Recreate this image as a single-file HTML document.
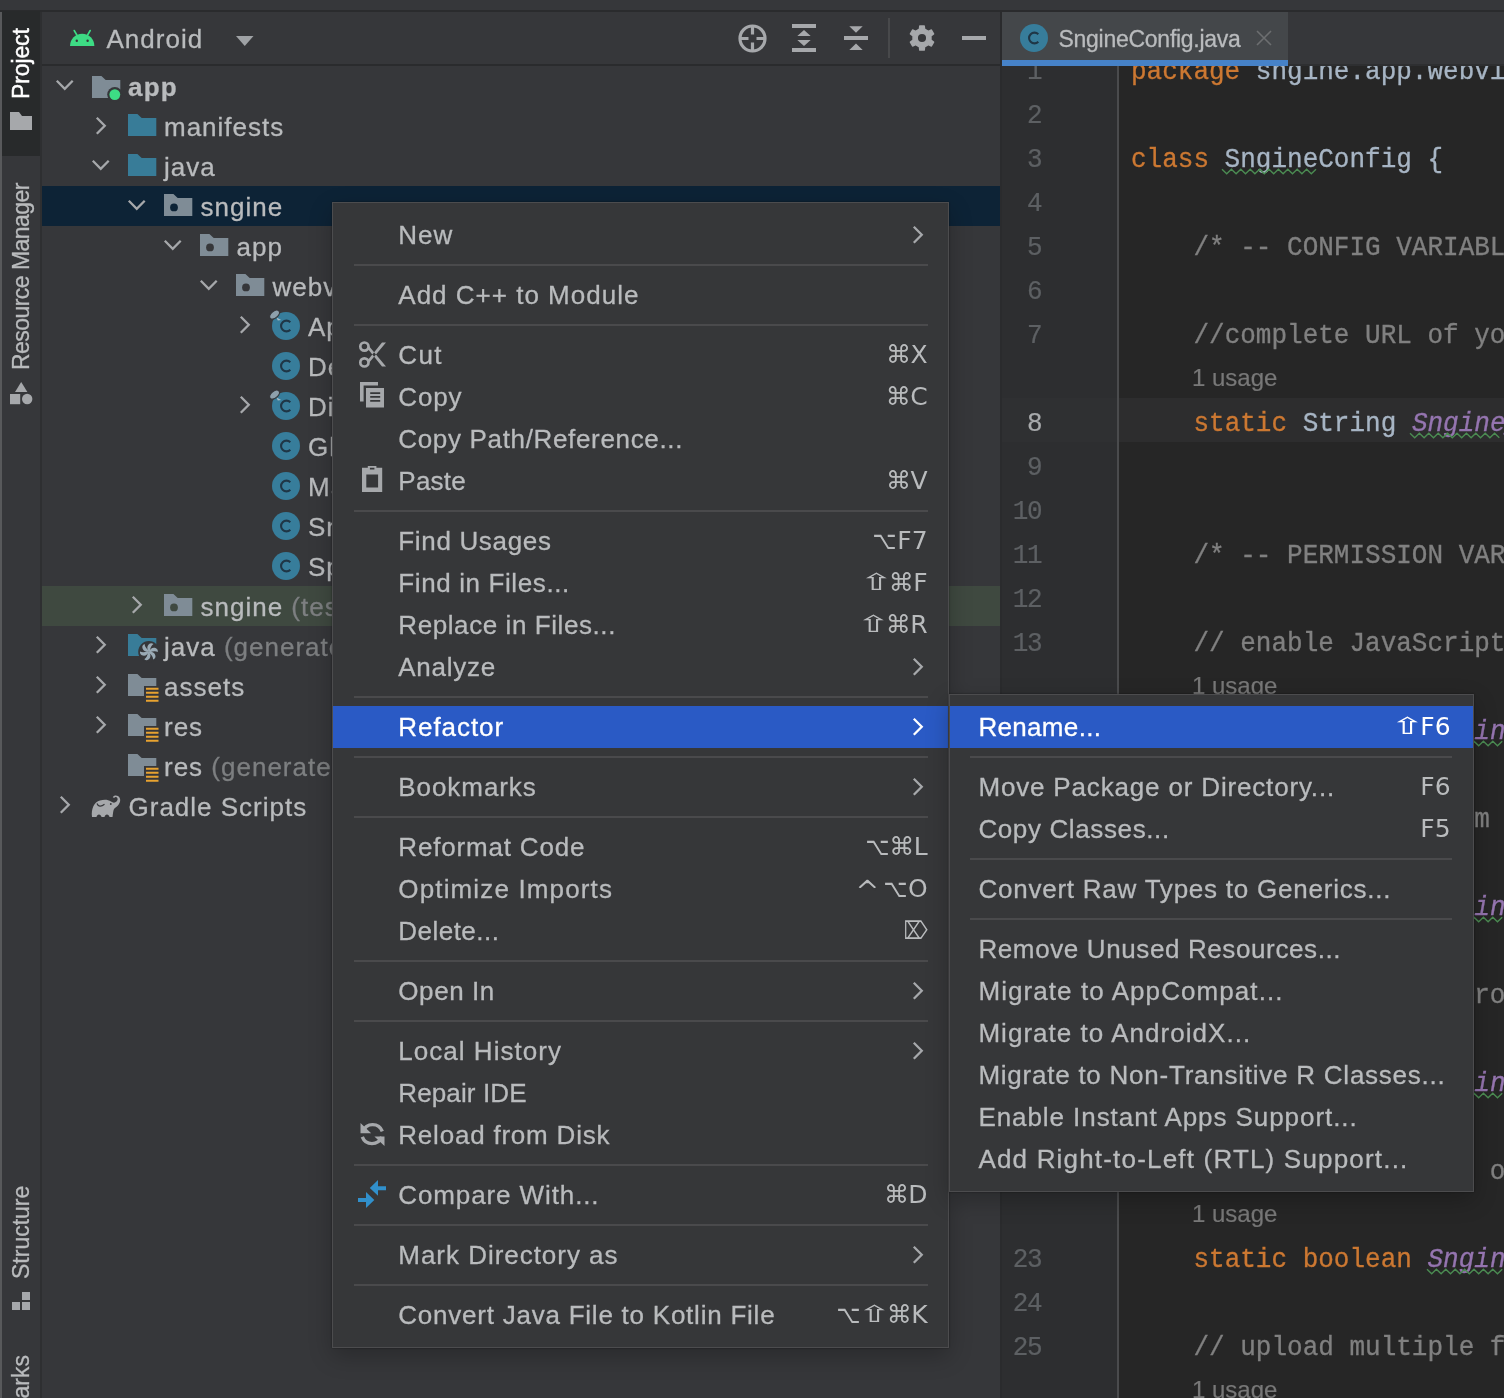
<!DOCTYPE html><html><head><meta charset="utf-8"><title>IDE</title><style>
*{box-sizing:border-box;margin:0;padding:0}
html,body{width:1504px;height:1398px;overflow:hidden;background:#36373a}
body{position:relative;font-family:"Liberation Sans","DejaVu Sans",sans-serif;font-size:26px;color:#b9bbbd;letter-spacing:.8px;-webkit-text-stroke:.3px}
#root{position:absolute;left:0;top:0;width:1504px;height:1398px;will-change:transform}
.abs{position:absolute}
.t{position:absolute;white-space:pre;line-height:40px;height:40px;letter-spacing:1px}
.row{position:absolute;left:42px;width:958px;height:40px}
.mi{position:absolute;white-space:pre;line-height:42px;height:42px;left:0;width:100%}
.mi .l{position:absolute;top:.4px}
.mi .r{position:absolute;top:0;font-family:"DejaVu Sans","Liberation Sans",sans-serif;font-size:25px;letter-spacing:0;-webkit-text-stroke:0}
.sep{position:absolute;height:2px;background:#4a4a4c}
.menu{position:absolute;background:#363739;border:1px solid #4c4c4e;box-shadow:0 0 2px rgba(0,0,0,.45),0 8px 22px rgba(0,0,0,.24)}
.hi{background:#2a5ac5;color:#fff}
.code{position:absolute;left:1131px;white-space:pre;font-family:"Liberation Mono","DejaVu Sans Mono",monospace;font-size:26px;letter-spacing:0;line-height:44px;height:44px;color:#a7b5c4;transform-origin:0 28.900px;transform:scaleY(1.09);-webkit-text-stroke:.3px}
.ln{position:absolute;left:1000px;width:41px;text-align:right;font-family:"Liberation Mono","DejaVu Sans Mono",monospace;font-size:26px;letter-spacing:-1.500px;line-height:44px;height:44px;color:#5d6063;transform-origin:0 28.900px;transform:scaleY(1.09);-webkit-text-stroke:.2px}
.us{position:absolute;left:1192px;font-size:24px;letter-spacing:0;line-height:44px;height:44px;color:#787878;white-space:pre;-webkit-text-stroke:.2px}
.kw{color:#cc7832} .cm{color:#808080} .fld{color:#9575b0;font-style:italic}
.vt{position:absolute;white-space:pre;transform-origin:0 0;transform:rotate(-90deg);font-size:23px;letter-spacing:0;line-height:30px;height:30px}
svg{position:absolute;overflow:visible}
</style></head><body><div id="root">
<div class="abs" style="left:0;top:10px;width:1504px;height:2px;background:#2a2b2d"></div>
<div class="abs" style="left:0;top:12px;width:2px;height:1386px;background:#58595b"></div>
<div class="abs" style="left:2px;top:11px;width:38px;height:145px;background:#282a2b"></div>
<div class="abs" style="left:40px;top:12px;width:2px;height:1386px;background:#2e2f31"></div>
<div class="abs" style="left:42px;top:64px;width:958px;height:2px;background:#2a2b2d"></div>
<div class="vt" style="left:6px;top:99px;color:#ffffff;letter-spacing:-.13px;-webkit-text-stroke:.5px #fff">Project</div>
<div class="vt" style="left:6px;top:370px;color:#b9bbbd;letter-spacing:-.55px">Resource Manager</div>
<div class="vt" style="left:6px;top:1279px;color:#b9bbbd;">Structure</div>
<div class="vt" style="left:6px;top:1470px;color:#b9bbbd;">Bookmarks</div>
<svg style="left:10px;top:112px" width="22" height="18" viewBox="0 0 22 18"><path d="M0 0h9l3 4h10v14H0z" fill="#a6a8ab"/></svg>
<svg style="left:9.800px;top:382px" width="23" height="23" viewBox="0 0 23 23"><path d="M11.200 0l6.200 10H5z" fill="#a6a8ab"/><rect x="0" y="12" width="10.200" height="10.200" fill="#a6a8ab"/><circle cx="17.200" cy="17" r="5.200" fill="#a6a8ab"/></svg>
<svg style="left:12px;top:1292px" width="18" height="18" viewBox="0 0 18 18"><rect x="10" y="0" width="8" height="8" fill="#a6a8ab"/><rect x="0" y="10" width="8" height="8" fill="#a6a8ab"/><rect x="10" y="10" width="8" height="8" fill="#a6a8ab"/></svg>
<svg style="left:70px;top:29px" width="25" height="18" viewBox="0 0 25 18"><path d="M0 17a12.200 12.200 0 0 1 24.400 0z" fill="#3ddc84"/><path d="M4.200 1.500l3.500 6M20.200 1.500l-3.500 6" stroke="#3ddc84" stroke-width="1.600" stroke-linecap="round"/><circle cx="6.800" cy="11.800" r="1.200" fill="#36373a"/><circle cx="17.600" cy="11.800" r="1.200" fill="#36373a"/></svg>
<div class="t" style="left:106.500px;top:19px">Android</div>
<svg style="left:235.500px;top:36px" width="17.500" height="10" viewBox="0 0 17.500 10"><path d="M0 0h17.500l-8.750 10z" fill="#9fa2a5"/></svg>
<svg style="left:737.500px;top:23.500px" width="29" height="29" viewBox="0 0 29 29" fill="none" stroke="#a6a8ab" stroke-width="3.200"><circle cx="14.500" cy="14.500" r="12.500"/><path d="M14.500 2v8.500M14.500 18.500v8.500M2 14.500h8.500M18.500 14.500h8.500"/></svg>
<svg style="left:792px;top:24px" width="24" height="28" viewBox="0 0 24 28" fill="#a6a8ab"><rect x="0" y="0" width="24" height="4"/><rect x="0" y="24" width="24" height="4"/><path d="M12 6l6.700 6H5.300zM12 22l6.700-6H5.300z"/></svg>
<svg style="left:844px;top:24px" width="24" height="28" viewBox="0 0 24 28" fill="#a6a8ab"><rect x="0" y="12" width="24" height="4"/><path d="M12 8.700l6.700-6.500H5.300zM12 19.500l6.700 6.500H5.300z"/></svg>
<div class="abs" style="left:888px;top:18px;width:2px;height:40px;background:#48494b"></div>
<svg style="left:909px;top:25px" width="26" height="26" viewBox="0 0 26 26"><path fill-rule="evenodd" fill="#a6a8ab" stroke="#a6a8ab" stroke-width="1.500" stroke-linejoin="round" d="M10.82 0.89L15.18 0.89L15.57 4.17L19.37 6.36L22.39 5.06L24.57 8.83L21.93 10.81L21.93 15.19L24.57 17.17L22.39 20.94L19.37 19.64L15.57 21.83L15.18 25.11L10.82 25.11L10.43 21.83L6.63 19.64L3.61 20.94L1.43 17.17L4.07 15.19L4.07 10.81L1.43 8.83L3.61 5.06L6.63 6.36L10.43 4.17ZM17.8 13a4.8 4.8 0 1 0 -9.6 0a4.8 4.8 0 1 0 9.6 0Z"/></svg>
<div class="abs" style="left:962px;top:36px;width:24px;height:4px;background:#a6a8ab"></div>
<div class="row" style="top:186px;background:#0d2336"></div>
<div class="row" style="top:586px;background:#3f4940"></div>
<svg style="left:56.25px;top:79.5px" width="17.500" height="10" viewBox="0 0 17.500 10" fill="none" stroke="#a6a8ab" stroke-width="2.300"><path d="M.800 .800l7.950 7.950 7.950-7.950"/></svg>
<svg style="left:92px;top:76px" width="30" height="30" viewBox="0 0 30 30"><path d="M0 0h9.400l4.300 3.900h14.600v18.100H0z" fill="#7f8c96"/><circle cx="22.800" cy="18.600" r="7.600" fill="#36373a"/><circle cx="22.800" cy="18.600" r="5.400" fill="#3ddc84"/></svg>
<div class="t" style="left:128px;top:67px;font-weight:bold;letter-spacing:1.2px">app</div>
<svg style="left:95.5px;top:116.65px" width="10" height="17.500" viewBox="0 0 10 17.500" fill="none" stroke="#a6a8ab" stroke-width="2.300"><path d="M.800 .800l7.950 7.950-7.950 7.950"/></svg>
<svg style="left:128px;top:114px" width="28" height="22" viewBox="0 0 28 22"><path d="M0 0h9.400l4.300 3.900h14.600v18.100H0z" fill="#387c98"/></svg>
<div class="t" style="left:164px;top:107px;">manifests</div>
<svg style="left:92.05px;top:159.5px" width="17.500" height="10" viewBox="0 0 17.500 10" fill="none" stroke="#a6a8ab" stroke-width="2.300"><path d="M.800 .800l7.950 7.950 7.950-7.950"/></svg>
<svg style="left:128px;top:154px" width="28" height="22" viewBox="0 0 28 22"><path d="M0 0h9.400l4.300 3.900h14.600v18.100H0z" fill="#387c98"/></svg>
<div class="t" style="left:164px;top:147px;">java</div>
<svg style="left:128.25px;top:199.5px" width="17.500" height="10" viewBox="0 0 17.500 10" fill="none" stroke="#a6a8ab" stroke-width="2.300"><path d="M.800 .800l7.950 7.950 7.950-7.950"/></svg>
<svg style="left:164px;top:194px" width="28" height="22" viewBox="0 0 28 22"><path d="M0 0h9.400l4.300 3.900h14.600v18.100H0z" fill="#7f8c96"/><circle cx="10" cy="13.400" r="3.900" fill="#0d2336"/></svg>
<div class="t" style="left:200.5px;top:187px;">sngine</div>
<svg style="left:164.25px;top:239.5px" width="17.500" height="10" viewBox="0 0 17.500 10" fill="none" stroke="#a6a8ab" stroke-width="2.300"><path d="M.800 .800l7.950 7.950 7.950-7.950"/></svg>
<svg style="left:200px;top:234px" width="28" height="22" viewBox="0 0 28 22"><path d="M0 0h9.400l4.300 3.900h14.600v18.100H0z" fill="#7f8c96"/><circle cx="10" cy="13.400" r="3.900" fill="#36373a"/></svg>
<div class="t" style="left:236.5px;top:227px;">app</div>
<svg style="left:200.25px;top:279.5px" width="17.500" height="10" viewBox="0 0 17.500 10" fill="none" stroke="#a6a8ab" stroke-width="2.300"><path d="M.800 .800l7.950 7.950 7.950-7.950"/></svg>
<svg style="left:236px;top:274px" width="28" height="22" viewBox="0 0 28 22"><path d="M0 0h9.400l4.300 3.900h14.600v18.100H0z" fill="#7f8c96"/><circle cx="10" cy="13.400" r="3.900" fill="#36373a"/></svg>
<div class="t" style="left:272.5px;top:267px;">webview</div>
<svg style="left:239.5px;top:316.25px" width="10" height="17.500" viewBox="0 0 10 17.500" fill="none" stroke="#a6a8ab" stroke-width="2.300"><path d="M.800 .800l7.950 7.950-7.950 7.950"/></svg>
<svg style="left:272.2px;top:312px" width="28" height="28" viewBox="0 0 28 28"><circle cx="14" cy="14" r="14" fill="#377d9b"/><path d="M18.300 10.200a5.400 5.400 0 1 0 0 7.600" fill="none" stroke="#1f3646" stroke-width="2.100"/><ellipse cx="2.500" cy="2.600" rx="5.800" ry="3.400" transform="rotate(-40 2.500 2.600)" fill="#8ea0ab" stroke="#36373a" stroke-width="1.200"/><path d="M4.600 5.500l4.600 2.600-3.400.400z" fill="#a9bcc6"/></svg>
<div class="t" style="left:308px;top:307px;">App</div>
<svg style="left:272.2px;top:352px" width="28" height="28" viewBox="0 0 28 28"><circle cx="14" cy="14" r="14" fill="#377d9b"/><path d="M18.300 10.200a5.400 5.400 0 1 0 0 7.600" fill="none" stroke="#1f3646" stroke-width="2.100"/></svg>
<div class="t" style="left:308px;top:347px;">Det</div>
<svg style="left:239.5px;top:396.25px" width="10" height="17.500" viewBox="0 0 10 17.500" fill="none" stroke="#a6a8ab" stroke-width="2.300"><path d="M.800 .800l7.950 7.950-7.950 7.950"/></svg>
<svg style="left:272.2px;top:392px" width="28" height="28" viewBox="0 0 28 28"><circle cx="14" cy="14" r="14" fill="#377d9b"/><path d="M18.300 10.200a5.400 5.400 0 1 0 0 7.600" fill="none" stroke="#1f3646" stroke-width="2.100"/><ellipse cx="2.500" cy="2.600" rx="5.800" ry="3.400" transform="rotate(-40 2.500 2.600)" fill="#8ea0ab" stroke="#36373a" stroke-width="1.200"/><path d="M4.600 5.500l4.600 2.600-3.400.400z" fill="#a9bcc6"/></svg>
<div class="t" style="left:308px;top:387px;">Dir</div>
<svg style="left:272.2px;top:432px" width="28" height="28" viewBox="0 0 28 28"><circle cx="14" cy="14" r="14" fill="#377d9b"/><path d="M18.300 10.200a5.400 5.400 0 1 0 0 7.600" fill="none" stroke="#1f3646" stroke-width="2.100"/></svg>
<div class="t" style="left:308px;top:427px;">Gli</div>
<svg style="left:272.2px;top:472px" width="28" height="28" viewBox="0 0 28 28"><circle cx="14" cy="14" r="14" fill="#377d9b"/><path d="M18.300 10.200a5.400 5.400 0 1 0 0 7.600" fill="none" stroke="#1f3646" stroke-width="2.100"/></svg>
<div class="t" style="left:308px;top:467px;">Mai</div>
<svg style="left:272.2px;top:512px" width="28" height="28" viewBox="0 0 28 28"><circle cx="14" cy="14" r="14" fill="#377d9b"/><path d="M18.300 10.200a5.400 5.400 0 1 0 0 7.600" fill="none" stroke="#1f3646" stroke-width="2.100"/></svg>
<div class="t" style="left:308px;top:507px;">Sng</div>
<svg style="left:272.2px;top:552px" width="28" height="28" viewBox="0 0 28 28"><circle cx="14" cy="14" r="14" fill="#377d9b"/><path d="M18.300 10.200a5.400 5.400 0 1 0 0 7.600" fill="none" stroke="#1f3646" stroke-width="2.100"/></svg>
<div class="t" style="left:308px;top:547px;">Spl</div>
<svg style="left:132px;top:596.25px" width="10" height="17.500" viewBox="0 0 10 17.500" fill="none" stroke="#a6a8ab" stroke-width="2.300"><path d="M.800 .800l7.950 7.950-7.950 7.950"/></svg>
<svg style="left:164px;top:594px" width="28" height="22" viewBox="0 0 28 22"><path d="M0 0h9.400l4.300 3.900h14.600v18.100H0z" fill="#7f8c96"/><circle cx="10" cy="13.400" r="3.900" fill="#3f4940"/></svg>
<div class="t" style="left:200.5px;top:587px;">sngine <span style="color:#7d7f81">(test)</span></div>
<svg style="left:95.5px;top:636.25px" width="10" height="17.500" viewBox="0 0 10 17.500" fill="none" stroke="#a6a8ab" stroke-width="2.300"><path d="M.800 .800l7.950 7.950-7.950 7.950"/></svg>
<svg style="left:128px;top:634px" width="32" height="30" viewBox="0 0 32 30"><path d="M0 0h9.400l4.300 3.900h14.600v18.100H0z" fill="#387c98"/><circle cx="20.900" cy="17.700" r="10.700" fill="#36373a"/><g transform="translate(20.900 17.700)" fill="#9aaab5"><path transform="rotate(0)" d="M0 0C-1.800 -2.500 -2.500 -5.500 .500 -7.900C1.800 -8.900 3.600 -8.500 4.600 -7.600C2.400 -6.200 1.300 -3.500 1.100 -.800z"/><path transform="rotate(60)" d="M0 0C-1.800 -2.500 -2.500 -5.500 .500 -7.900C1.800 -8.900 3.600 -8.500 4.600 -7.600C2.400 -6.200 1.300 -3.500 1.100 -.800z"/><path transform="rotate(120)" d="M0 0C-1.800 -2.500 -2.500 -5.500 .500 -7.900C1.800 -8.900 3.600 -8.500 4.600 -7.600C2.400 -6.200 1.300 -3.500 1.100 -.800z"/><path transform="rotate(180)" d="M0 0C-1.800 -2.500 -2.500 -5.500 .500 -7.900C1.800 -8.900 3.600 -8.500 4.600 -7.600C2.400 -6.200 1.300 -3.500 1.100 -.800z"/><path transform="rotate(240)" d="M0 0C-1.800 -2.500 -2.500 -5.500 .500 -7.900C1.800 -8.900 3.600 -8.500 4.600 -7.600C2.400 -6.200 1.300 -3.500 1.100 -.800z"/><path transform="rotate(300)" d="M0 0C-1.800 -2.500 -2.500 -5.500 .500 -7.900C1.800 -8.900 3.600 -8.500 4.600 -7.600C2.400 -6.200 1.300 -3.500 1.100 -.800z"/></g></svg>
<div class="t" style="left:164px;top:627px;">java <span style="color:#7d7f81">(generated)</span></div>
<svg style="left:95.5px;top:676.25px" width="10" height="17.500" viewBox="0 0 10 17.500" fill="none" stroke="#a6a8ab" stroke-width="2.300"><path d="M.800 .800l7.950 7.950-7.950 7.950"/></svg>
<svg style="left:128px;top:674px" width="32" height="32" viewBox="0 0 32 32"><path d="M0 0h9.400l4.300 3.900h14.600v18.100H0z" fill="#7f8c96"/><rect x="16" y="12" width="16" height="20" fill="#36373a"/><path d="M18 14.800h12.500M18 18.800h12.500M18 22.800h12.500M18 26.800h12.500" stroke="#e8a330" stroke-width="2.100"/></svg>
<div class="t" style="left:164px;top:667px;">assets</div>
<svg style="left:95.5px;top:716.25px" width="10" height="17.500" viewBox="0 0 10 17.500" fill="none" stroke="#a6a8ab" stroke-width="2.300"><path d="M.800 .800l7.950 7.950-7.950 7.950"/></svg>
<svg style="left:128px;top:714px" width="32" height="32" viewBox="0 0 32 32"><path d="M0 0h9.400l4.300 3.900h14.600v18.100H0z" fill="#7f8c96"/><rect x="16" y="12" width="16" height="20" fill="#36373a"/><path d="M18 14.800h12.500M18 18.800h12.500M18 22.800h12.500M18 26.800h12.500" stroke="#e8a330" stroke-width="2.100"/></svg>
<div class="t" style="left:164px;top:707px;">res</div>
<svg style="left:128px;top:754px" width="32" height="32" viewBox="0 0 32 32"><path d="M0 0h9.400l4.300 3.900h14.600v18.100H0z" fill="#7f8c96"/><rect x="16" y="12" width="16" height="20" fill="#36373a"/><path d="M18 14.800h12.500M18 18.800h12.500M18 22.800h12.500M18 26.800h12.500" stroke="#e8a330" stroke-width="2.100"/></svg>
<div class="t" style="left:164px;top:747px;">res <span style="color:#7d7f81">(generated)</span></div>
<svg style="left:59.5px;top:796.25px" width="10" height="17.500" viewBox="0 0 10 17.500" fill="none" stroke="#a6a8ab" stroke-width="2.300"><path d="M.800 .800l7.950 7.950-7.950 7.950"/></svg>
<svg style="left:91px;top:795px" width="30" height="22" viewBox="0 0 30 22"><path fill="#a6a8ab" d="M1 22C0 14 3 7 9 5.500C13 4.500 17 4.500 20 6.500C22 8 24 8 25.500 6.500C27 5 27 3 25.500 2.200C24.500 1.800 23.500 2.300 23.200 3L21.800 2.200C22.500 .500 25 -.200 27 1C29.500 2.500 30 6 28 9C26.500 11.500 24 12.500 23 14C22 16 22 19 21.500 22L18.500 22C18.300 20.500 17 19.500 16 19.500C14.800 19.500 13.800 20.500 13.500 22L10.500 22C10.300 20.500 9 19.500 8 19.500C6.800 19.500 5.800 20.500 5.500 22Z"/><path d="M6 8.500C7 11.500 10 12 13.500 9.300" fill="none" stroke="#36373a" stroke-width="1.200"/><circle cx="19.800" cy="9" r=".900" fill="#36373a"/></svg>
<div class="t" style="left:128.5px;top:787px;">Gradle Scripts</div>
<div class="abs" style="left:1000px;top:66px;width:504px;height:1332px;background:#262626"></div>
<div class="abs" style="left:1000px;top:66px;width:118px;height:1332px;background:#2d2e30"></div>
<div class="abs" style="left:1117px;top:66px;width:2px;height:1332px;background:#4a4b4d"></div>
<div class="abs" style="left:1000px;top:12px;width:2px;height:1386px;background:#2a2b2d"></div>
<div class="abs" style="left:1119px;top:398px;width:385px;height:44px;background:#2d2d2e"></div>
<div class="abs" style="left:1002px;top:398px;width:115px;height:44px;background:#2f3032"></div>
<div class="abs" style="left:1288px;top:64px;width:216px;height:2px;background:#2e2f31"></div>
<div class="abs" style="left:1002px;top:12px;width:286px;height:49px;background:#44474a"></div>
<div class="abs" style="left:1002px;top:60px;width:286px;height:6px;background:#4682c8"></div>
<svg style="left:1020px;top:24px" width="28" height="28" viewBox="0 0 28 28"><circle cx="14" cy="14" r="14" fill="#377d9b"/><path d="M18.300 10.200a5.400 5.400 0 1 0 0 7.600" fill="none" stroke="#1f3646" stroke-width="2.100"/></svg>
<div class="t" style="left:1058.500px;top:19px;font-size:23px;letter-spacing:-.27px;color:#b9bbbd">SngineConfig.java</div>
<svg style="left:1257px;top:31px" width="14" height="14" viewBox="0 0 14 14" stroke="#6c6e70" stroke-width="1.600"><path d="M0 0l14 14M14 0L0 14"/></svg>
<div class="abs" style="left:0;top:66px;width:1504px;height:1332px;overflow:hidden"><div class="abs" style="left:0;top:-66px;width:1504px;height:1398px">
<div class="ln" style="top:49.8px;">1</div>
<div class="code" style="top:49.8px"><span class="kw">package</span> sngine.app.webview;</div>
<div class="ln" style="top:93.8px;">2</div>
<div class="ln" style="top:137.8px;">3</div>
<div class="code" style="top:137.8px"><span class="kw">class</span> SngineConfig {</div>
<div class="ln" style="top:181.8px;">4</div>
<div class="ln" style="top:225.8px;">5</div>
<div class="code" style="top:225.8px">    <span class="cm">/* -- CONFIG VARIABLES -- */</span></div>
<div class="ln" style="top:269.8px;">6</div>
<div class="ln" style="top:313.8px;">7</div>
<div class="code" style="top:313.8px">    <span class="cm">//complete URL of your website</span></div>
<div class="us" style="top:355.6px">1 usage</div>
<div class="ln" style="top:401.8px;color:#a9abad">8</div>
<div class="code" style="top:401.8px">    <span class="kw">static</span> String <span class="fld">Sngine_URL</span></div>
<div class="ln" style="top:445.8px;">9</div>
<div class="ln" style="top:489.8px;">10</div>
<div class="ln" style="top:533.8px;">11</div>
<div class="code" style="top:533.8px">    <span class="cm">/* -- PERMISSION VARIABLES -- */</span></div>
<div class="ln" style="top:577.8px;">12</div>
<div class="ln" style="top:621.8px;">13</div>
<div class="code" style="top:621.8px">    <span class="cm">// enable JavaScript for webview</span></div>
<div class="us" style="top:663.6px">1 usage</div>
<div class="ln" style="top:709.8px;">14</div>
<div class="code" style="top:709.8px">    <span class="kw">static boolean</span> <span class="fld">Sngine_JS</span></div>
<div class="ln" style="top:753.8px;">15</div>
<div class="ln" style="top:797.8px;">16</div>
<div class="code" style="top:797.8px">    <span class="cm">// upload file from webview</span></div>
<div class="us" style="top:839.6px">1 usage</div>
<div class="ln" style="top:885.8px;">17</div>
<div class="code" style="top:885.8px">    <span class="kw">static boolean</span> <span class="fld">Sngine_FUPLOAD</span></div>
<div class="ln" style="top:929.8px;">18</div>
<div class="ln" style="top:973.8px;">19</div>
<div class="code" style="top:973.8px">    <span class="cm">// show and hide progress bar</span></div>
<div class="us" style="top:1015.6px">1 usage</div>
<div class="ln" style="top:1061.8px;">20</div>
<div class="code" style="top:1061.8px">    <span class="kw">static boolean</span> <span class="fld">Sngine_PBAR</span></div>
<div class="ln" style="top:1105.8px;">21</div>
<div class="ln" style="top:1149.8px;">22</div>
<div class="code" style="top:1149.8px">    <span class="cm">// enable location or not</span></div>
<div class="us" style="top:1191.6px">1 usage</div>
<div class="ln" style="top:1237.8px;">23</div>
<div class="code" style="top:1237.8px">    <span class="kw">static boolean</span> <span class="fld">Sngine_LOCATION</span></div>
<div class="ln" style="top:1281.8px;">24</div>
<div class="ln" style="top:1325.8px;">25</div>
<div class="code" style="top:1325.8px">    <span class="cm">// upload multiple files</span></div>
<div class="us" style="top:1367.6px">1 usage</div>
<svg style="left:0;top:0" width="1504" height="1398"><path d="M1222.0 169.3L1226.7 173.7L1231.4 169.3L1236.1 173.7L1240.8 169.3L1245.5 173.7L1250.2 169.3L1254.9 173.7L1259.6 169.3L1264.3 173.7L1269.0 169.3L1273.7 173.7L1278.4 169.3L1283.1 173.7L1287.8 169.3L1292.5 173.7L1297.2 169.3L1301.9 173.7L1306.6 169.3L1311.3 173.7L1316.0 169.3" fill="none" stroke="#4b8b52" stroke-width="1.400"/></svg>
<svg style="left:0;top:0" width="1504" height="1398"><path d="M1410.0 433.3L1414.7 437.7L1419.4 433.3L1424.1 437.7L1428.8 433.3L1433.5 437.7L1438.2 433.3L1442.9 437.7L1447.6 433.3L1452.3 437.7L1457.0 433.3L1461.7 437.7L1466.4 433.3L1471.1 437.7L1475.8 433.3L1480.5 437.7L1485.2 433.3L1489.9 437.7L1494.6 433.3L1499.3 437.7" fill="none" stroke="#4b8b52" stroke-width="1.400"/></svg>
<svg style="left:0;top:0" width="1504" height="1398"><path d="M1427.0 741.3L1431.7 745.7L1436.4 741.3L1441.1 745.7L1445.8 741.3L1450.5 745.7L1455.2 741.3L1459.9 745.7L1464.6 741.3L1469.3 745.7L1474.0 741.3L1478.7 745.7L1483.4 741.3L1488.1 745.7L1492.8 741.3L1497.5 745.7L1502.2 741.3" fill="none" stroke="#4b8b52" stroke-width="1.400"/></svg>
<svg style="left:0;top:0" width="1504" height="1398"><path d="M1427.0 917.3L1431.7 921.7L1436.4 917.3L1441.1 921.7L1445.8 917.3L1450.5 921.7L1455.2 917.3L1459.9 921.7L1464.6 917.3L1469.3 921.7L1474.0 917.3L1478.7 921.7L1483.4 917.3L1488.1 921.7L1492.8 917.3L1497.5 921.7L1502.2 917.3" fill="none" stroke="#4b8b52" stroke-width="1.400"/></svg>
<svg style="left:0;top:0" width="1504" height="1398"><path d="M1427.0 1093.3L1431.7 1097.7L1436.4 1093.3L1441.1 1097.7L1445.8 1093.3L1450.5 1097.7L1455.2 1093.3L1459.9 1097.7L1464.6 1093.3L1469.3 1097.7L1474.0 1093.3L1478.7 1097.7L1483.4 1093.3L1488.1 1097.7L1492.8 1093.3L1497.5 1097.7L1502.2 1093.3" fill="none" stroke="#4b8b52" stroke-width="1.400"/></svg>
<svg style="left:0;top:0" width="1504" height="1398"><path d="M1427.0 1269.3L1431.7 1273.7L1436.4 1269.3L1441.1 1273.7L1445.8 1269.3L1450.5 1273.7L1455.2 1269.3L1459.9 1273.7L1464.6 1269.3L1469.3 1273.7L1474.0 1269.3L1478.7 1273.7L1483.4 1269.3L1488.1 1273.7L1492.8 1269.3L1497.5 1273.7L1502.2 1269.3" fill="none" stroke="#4b8b52" stroke-width="1.400"/></svg>
</div></div>
<div class="menu" style="left:332px;top:202px;width:617px;height:1146px"><div class="mi" style="top:11px"><span class="l" style="left:65.30000000000001px;letter-spacing:1.042px">New</span><svg style="left:580px;top:12.250px" width="10" height="17.500" viewBox="0 0 10 17.500" fill="none" stroke="#a6a8ab" stroke-width="2.300"><path d="M.800 .800l7.950 7.950-7.950 7.950"/></svg></div><div class="sep" style="left:21px;width:574px;top:61px"></div><div class="mi" style="top:71px"><span class="l" style="left:65.30000000000001px;letter-spacing:1.003px">Add C++ to Module</span></div><div class="sep" style="left:21px;width:574px;top:121px"></div><div class="mi" style="top:131px"><span class="l" style="left:65.30000000000001px;letter-spacing:1.366px">Cut</span><span class="r" style="right:20.399999999999977px"><span style="display:inline-block;margin:0 -0.6px">⌘</span>X</span></div><div class="mi" style="top:173px"><span class="l" style="left:65.30000000000001px;letter-spacing:0.866px">Copy</span><span class="r" style="right:20.399999999999977px"><span style="display:inline-block;margin:0 -0.6px">⌘</span>C</span></div><div class="mi" style="top:215px"><span class="l" style="left:65.30000000000001px;letter-spacing:0.659px">Copy Path/Reference...</span></div><div class="mi" style="top:257px"><span class="l" style="left:65.30000000000001px;letter-spacing:0.25px">Paste</span><span class="r" style="right:20.399999999999977px"><span style="display:inline-block;margin:0 -0.6px">⌘</span>V</span></div><div class="sep" style="left:21px;width:574px;top:307px"></div><div class="mi" style="top:317px"><span class="l" style="left:65.30000000000001px;letter-spacing:0.663px">Find Usages</span><span class="r" style="right:20.399999999999977px"><span style="display:inline-block;transform:translateY(0px) scale(0.83,1);margin:0 -1.5px">⌥</span>F7</span></div><div class="mi" style="top:359px"><span class="l" style="left:65.30000000000001px;letter-spacing:0.611px">Find in Files...</span><span class="r" style="right:20.399999999999977px"><span style="display:inline-block;transform:translateY(0px) scale(1.7,0.93);margin:0 2.75px">⇧</span><span style="display:inline-block;margin:0 -0.6px">⌘</span>F</span></div><div class="mi" style="top:401px"><span class="l" style="left:65.30000000000001px;letter-spacing:0.58px">Replace in Files...</span><span class="r" style="right:20.399999999999977px"><span style="display:inline-block;transform:translateY(0px) scale(1.7,0.93);margin:0 2.75px">⇧</span><span style="display:inline-block;margin:0 -0.6px">⌘</span>R</span></div><div class="mi" style="top:443px"><span class="l" style="left:65.30000000000001px;letter-spacing:0.717px">Analyze</span><svg style="left:580px;top:12.250px" width="10" height="17.500" viewBox="0 0 10 17.500" fill="none" stroke="#a6a8ab" stroke-width="2.300"><path d="M.800 .800l7.950 7.950-7.950 7.950"/></svg></div><div class="sep" style="left:21px;width:574px;top:493px"></div><div class="mi hi" style="top:503px"><span class="l" style="left:65.30000000000001px;letter-spacing:0.933px">Refactor</span><svg style="left:580px;top:12.250px" width="10" height="17.500" viewBox="0 0 10 17.500" fill="none" stroke="#fff" stroke-width="2.300"><path d="M.800 .800l7.950 7.950-7.950 7.950"/></svg></div><div class="sep" style="left:21px;width:574px;top:553px"></div><div class="mi" style="top:563px"><span class="l" style="left:65.30000000000001px;letter-spacing:0.932px">Bookmarks</span><svg style="left:580px;top:12.250px" width="10" height="17.500" viewBox="0 0 10 17.500" fill="none" stroke="#a6a8ab" stroke-width="2.300"><path d="M.800 .800l7.950 7.950-7.950 7.950"/></svg></div><div class="sep" style="left:21px;width:574px;top:613px"></div><div class="mi" style="top:623px"><span class="l" style="left:65.30000000000001px;letter-spacing:0.816px">Reformat Code</span><span class="r" style="right:20.399999999999977px"><span style="display:inline-block;transform:translateY(0px) scale(0.83,1);margin:0 -1.5px">⌥</span><span style="display:inline-block;margin:0 -0.6px">⌘</span>L</span></div><div class="mi" style="top:665px"><span class="l" style="left:65.30000000000001px;letter-spacing:1.147px">Optimize Imports</span><span class="r" style="right:20.399999999999977px"><span style="display:inline-block;transform:translateY(7px) scale(1.85,1.7);-webkit-text-stroke:.9px #363739;margin:0 4.2px">⌃</span><span style="display:inline-block;transform:translateY(0px) scale(0.83,1);margin:0 -1.5px">⌥</span>O</span></div><div class="mi" style="top:707px"><span class="l" style="left:65.30000000000001px;letter-spacing:0.471px">Delete...</span><span class="r" style="right:20.399999999999977px"><span style="display:inline-block;transform:translateY(0px) scale(0.675,0.98);margin:0 -5.7px">⌦</span></span></div><div class="sep" style="left:21px;width:574px;top:757px"></div><div class="mi" style="top:767px"><span class="l" style="left:65.30000000000001px;letter-spacing:0.581px">Open In</span><svg style="left:580px;top:12.250px" width="10" height="17.500" viewBox="0 0 10 17.500" fill="none" stroke="#a6a8ab" stroke-width="2.300"><path d="M.800 .800l7.950 7.950-7.950 7.950"/></svg></div><div class="sep" style="left:21px;width:574px;top:817px"></div><div class="mi" style="top:827px"><span class="l" style="left:65.30000000000001px;letter-spacing:1.027px">Local History</span><svg style="left:580px;top:12.250px" width="10" height="17.500" viewBox="0 0 10 17.500" fill="none" stroke="#a6a8ab" stroke-width="2.300"><path d="M.800 .800l7.950 7.950-7.950 7.950"/></svg></div><div class="mi" style="top:869px"><span class="l" style="left:65.30000000000001px;letter-spacing:0.127px">Repair IDE</span></div><div class="mi" style="top:911px"><span class="l" style="left:65.30000000000001px;letter-spacing:0.786px">Reload from Disk</span></div><div class="sep" style="left:21px;width:574px;top:961px"></div><div class="mi" style="top:971px"><span class="l" style="left:65.30000000000001px;letter-spacing:0.891px">Compare With...</span><span class="r" style="right:20.399999999999977px"><span style="display:inline-block;margin:0 -0.6px">⌘</span>D</span></div><div class="sep" style="left:21px;width:574px;top:1021px"></div><div class="mi" style="top:1031px"><span class="l" style="left:65.30000000000001px;letter-spacing:0.969px">Mark Directory as</span><svg style="left:580px;top:12.250px" width="10" height="17.500" viewBox="0 0 10 17.500" fill="none" stroke="#a6a8ab" stroke-width="2.300"><path d="M.800 .800l7.950 7.950-7.950 7.950"/></svg></div><div class="sep" style="left:21px;width:574px;top:1081px"></div><div class="mi" style="top:1091px"><span class="l" style="left:65.30000000000001px;letter-spacing:0.765px">Convert Java File to Kotlin File</span><span class="r" style="right:20.399999999999977px"><span style="display:inline-block;transform:translateY(0px) scale(0.83,1);margin:0 -1.5px">⌥</span><span style="display:inline-block;transform:translateY(0px) scale(1.7,0.93);margin:0 2.75px">⇧</span><span style="display:inline-block;margin:0 -0.6px">⌘</span>K</span></div><svg style="left:26px;top:137.5px" width="27" height="27" viewBox="0 0 27 27"><g fill="none" stroke="#a6a8ab" stroke-width="2.700"><circle cx="5.400" cy="5.600" r="4.100"/><circle cx="5.400" cy="21.400" r="4.100"/></g><path fill="#a6a8ab" d="M8.300 7.300L10.300 5.400L27 25.500L23 25.500zM8.300 19.700L10.300 21.600L27 1.500L23 1.500z"/></svg><svg style="left:27px;top:179.3px" width="24" height="26" viewBox="0 0 24 26"><path d="M0 0h18v3.600H3.600v16H0z" fill="#a6a8ab"/><path fill-rule="evenodd" d="M6 6h18v19.600H6zM10.200 10.200v1.700h10v-1.700zM10.200 14.100v1.700h10v-1.700zM10.200 18v1.700h10v-1.700z" fill="#a6a8ab"/></svg><svg style="left:29px;top:263.3px" width="21" height="26" viewBox="0 0 21 26"><path fill-rule="evenodd" fill="#a6a8ab" d="M0 1.700h5.800V0h8.600v1.700h5.800v24.200H0zM4.300 8.500v13h11.800v-13zM7.900 1.700v1.900h4.500V1.700z"/></svg><svg style="left:26.69999999999999px;top:918.8px" width="25" height="24" viewBox="0 0 25 24"><g fill="none" stroke="#a6a8ab" stroke-width="3.400"><path d="M3 9.300A10.300 10.300 0 0 1 22.300 9.300"/><path d="M21.600 14.900A10.300 10.300 0 0 1 2.300 14.900"/></g><path d="M.500 1.100V11.200H11.200zM24.500 23.900V14.400H14.400z" fill="#a6a8ab"/></svg><svg style="left:-333px;top:-203px" width="1" height="1"><g fill="#3190cc"><path d="M369.800 1188.100L378 1180V1186.200H386V1190.200H378V1195.700z"/><path d="M374.300 1200L366 1192V1198H358V1202H366V1208z"/></g></svg></div>
<div class="menu" style="left:949px;top:694px;width:525px;height:498px"><div class="mi hi" style="top:11px"><span class="l" style="left:28.399999999999977px;letter-spacing:0.331px">Rename...</span><span class="r" style="right:22.40000000000009px"><span style="display:inline-block;transform:translateY(0px) scale(1.7,0.93);margin:0 2.75px">⇧</span>F6</span></div><div class="sep" style="left:20px;width:482px;top:61px"></div><div class="mi" style="top:71px"><span class="l" style="left:28.399999999999977px;letter-spacing:0.833px">Move Package or Directory...</span><span class="r" style="right:22.40000000000009px">F6</span></div><div class="mi" style="top:113px"><span class="l" style="left:28.399999999999977px;letter-spacing:0.623px">Copy Classes...</span><span class="r" style="right:22.40000000000009px">F5</span></div><div class="sep" style="left:20px;width:482px;top:163px"></div><div class="mi" style="top:173px"><span class="l" style="left:28.399999999999977px;letter-spacing:0.769px">Convert Raw Types to Generics...</span></div><div class="sep" style="left:20px;width:482px;top:223px"></div><div class="mi" style="top:233px"><span class="l" style="left:28.399999999999977px;letter-spacing:0.615px">Remove Unused Resources...</span></div><div class="mi" style="top:275px"><span class="l" style="left:28.399999999999977px;letter-spacing:1.078px">Migrate to AppCompat...</span></div><div class="mi" style="top:317px"><span class="l" style="left:28.399999999999977px;letter-spacing:1.037px">Migrate to AndroidX...</span></div><div class="mi" style="top:359px"><span class="l" style="left:28.399999999999977px;letter-spacing:0.76px">Migrate to Non-Transitive R Classes...</span></div><div class="mi" style="top:401px"><span class="l" style="left:28.399999999999977px;letter-spacing:0.933px">Enable Instant Apps Support...</span></div><div class="mi" style="top:443px"><span class="l" style="left:28.399999999999977px;letter-spacing:1.188px">Add Right-to-Left (RTL) Support...</span></div></div>
</div></body></html>
